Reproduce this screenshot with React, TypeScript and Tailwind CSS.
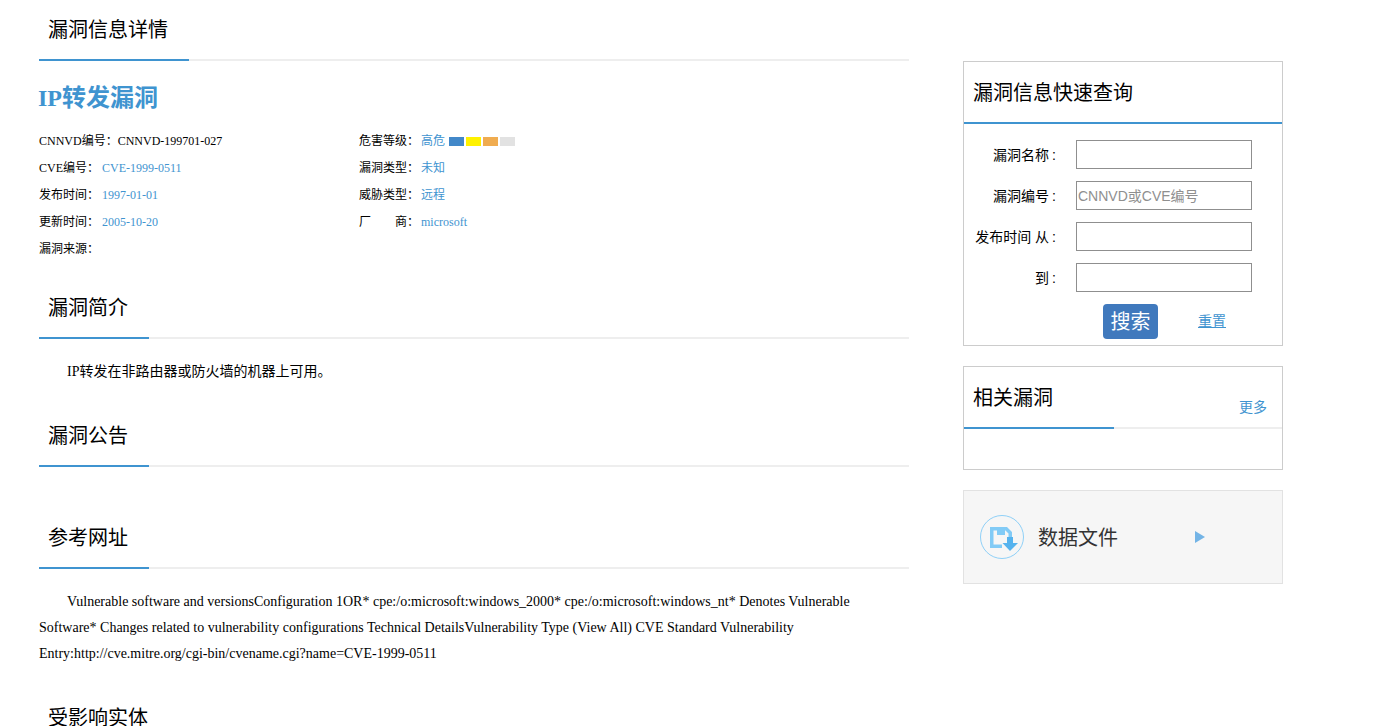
import React from "react";

const Heading = ({ title, wide }: { title: string; wide?: boolean }) => (
  <div className="h-[61px] border-b-2 border-[#eeeeee] pt-[15px]">
    <div
      className={`h-[46px] border-b-2 border-[#3f94d0] pl-[9px] text-[20px] leading-[30px] text-black ${
        wide ? "w-[150px]" : "w-[110px]"
      }`}
    >
      {title}
    </div>
  </div>
);

const InfoRow = ({ label, children }: { label: React.ReactNode; children?: React.ReactNode }) => (
  <div className="h-[27px] text-[12px] leading-[27px] text-black">
    {label}
    {children}
  </div>
);

const Value = ({ text }: { text: string }) => <span className="ml-[3px] text-[#3f94d0]">{text}</span>;

const RightValue = ({ text }: { text: string }) => <span className="ml-[2px] text-[#3f94d0]">{text}</span>;

const FormRow = ({ label, placeholder }: { label: string; placeholder?: string }) => (
  <div className="flex h-[29px] items-center">
    <label className="w-[92px] whitespace-nowrap pt-[1px] text-right text-[14px] text-black">
      {label}
      <span className="ml-[3px]">:</span>
    </label>
    <input
      placeholder={placeholder}
      className="ml-[20px] h-[29px] w-[176px] border border-[#8f8f8f] px-[1px] text-[14px] outline-none placeholder:text-[#8f8f8f]"
    />
  </div>
);

const SaveIcon = () => (
  <svg width="44" height="44" viewBox="0 0 44 44" fill="none">
    <circle cx="22" cy="22" r="21.5" stroke="#8fd0f7" strokeWidth="1" />
    <path d="M10 12H27l5 5v6h-3.5v-4.5l-3-3H13.5v14h8.5v3.5H10z" fill="#82cbf6" />
    <path d="M17 12h8v8h-8z" fill="#82cbf6" />
    <path d="M27 22h6v6h5l-8 8-7.5-8H27z" fill="#56b3ee" />
  </svg>
);

export default function App() {
  return (
    <div className="flex h-[726px] gap-[54px] overflow-hidden bg-white pl-[39px] font-['Liberation_Serif','Noto_Sans_CJK_SC',serif]">
      <div className="w-[870px] shrink-0">
        <div className="font-['Liberation_Sans','Noto_Sans_CJK_SC',sans-serif]">
          <Heading title="漏洞信息详情" wide />
        </div>
        <h1 className="-ml-px mt-[19px] text-[24px] font-bold leading-[36px] text-[#3f94d0]">IP转发漏洞</h1>
        <div className="mt-[12px] grid h-[135px] grid-cols-[320px_1fr]">
          <div>
            <InfoRow label="CNNVD编号：">
              <span>CNNVD-199701-027</span>
            </InfoRow>
            <InfoRow label="CVE编号：">
              <Value text="CVE-1999-0511" />
            </InfoRow>
            <InfoRow label="发布时间：">
              <Value text="1997-01-01" />
            </InfoRow>
            <InfoRow label="更新时间：">
              <Value text="2005-10-20" />
            </InfoRow>
            <InfoRow label="漏洞来源：" />
          </div>
          <div>
            <InfoRow label="危害等级：">
              <RightValue text="高危" />
              <span className="ml-[4px] inline-flex gap-[2px] align-[-1px]">
                <span className="h-[9px] w-[15px] bg-[#4288c9]" />
                <span className="h-[9px] w-[15px] bg-[#fff200]" />
                <span className="h-[9px] w-[15px] bg-[#f0ac50]" />
                <span className="h-[9px] w-[15px] bg-[#e2e2e2]" />
              </span>
            </InfoRow>
            <InfoRow label="漏洞类型：">
              <RightValue text="未知" />
            </InfoRow>
            <InfoRow label="威胁类型：">
              <RightValue text="远程" />
            </InfoRow>
            <InfoRow
              label={
                <span className="inline-flex w-[60px] justify-between">
                  <span>厂</span>
                  <span>商：</span>
                </span>
              }
            >
              <RightValue text="microsoft" />
            </InfoRow>
          </div>
        </div>

        <div className="mt-[15px]">
          <Heading title="漏洞简介" />
        </div>
        <p className="mt-[20px] indent-[28px] text-[14px] leading-[26px] text-black">IP转发在非路由器或防火墙的机器上可用。</p>
        <div className="mt-[21px]">
          <Heading title="漏洞公告" />
        </div>
        <div className="mt-[41px]">
          <Heading title="参考网址" />
        </div>
        <p className="mt-[20px] indent-[28px] text-[14px] leading-[26px] text-black">
          Vulnerable software and versionsConfiguration 1OR* cpe:/o:microsoft:windows_2000* cpe:/o:microsoft:windows_nt* Denotes Vulnerable Software* Changes related to vulnerability configurations Technical DetailsVulnerability Type (View All) CVE Standard Vulnerability Entry:http://cve.mitre.org/cgi-bin/cvename.cgi?name=CVE-1999-0511
        </p>
        <div className="mt-[21px]">
          <Heading title="受影响实体" />
        </div>
      </div>

      <div className="mt-[61px] w-[320px] shrink-0 font-['Liberation_Sans','Noto_Sans_CJK_SC',sans-serif]">
        <div className="h-[285px] border border-[#cccccc]">
          <div className="h-[62px] border-b-2 border-[#3f94d0] pl-[9px] pt-[16px] text-[20px] leading-[30px] text-black">漏洞信息快速查询</div>
          <div className="mt-[16px] flex flex-col gap-[12px]">
            <FormRow label="漏洞名称" />
            <FormRow label="漏洞编号" placeholder="CNNVD或CVE编号" />
            <FormRow label="发布时间 从" />
            <FormRow label="到" />
          </div>
          <div className="mt-[12px] flex items-center pl-[139px]">
            <button className="h-[35px] w-[55px] rounded-[4px] bg-[#4079bd] pt-[1px] text-[20px] leading-[34px] text-white">搜索</button>
            <a className="ml-[40px] text-[14px] text-[#3f94d0] underline">重置</a>
          </div>
        </div>

        <div className="mt-[20px] h-[104px] border border-[#cccccc]">
          <div className="flex h-[62px] justify-between border-b-2 border-[#eeeeee]">
            <div className="h-[62px] w-[150px] border-b-2 border-[#3f94d0] pl-[9px] pt-[16px] text-[20px] leading-[30px] text-black">相关漏洞</div>
            <a className="mr-[15px] mt-[30px] text-[14px] leading-[20px] text-[#3f94d0]">更多</a>
          </div>
        </div>

        <div className="mt-[20px] flex h-[94px] items-center border border-[#e2e2e2] bg-[#f6f6f6] pl-[16px]">
          <SaveIcon />
          <span className="ml-[14px] pt-[1px] text-[20px] text-[#333333]">数据文件</span>
          <svg className="ml-[77px]" width="10" height="12" viewBox="0 0 10 12">
            <path d="M0 0l10 6-10 6z" fill="#73b4e6" />
          </svg>
        </div>
      </div>
    </div>
  );
}
